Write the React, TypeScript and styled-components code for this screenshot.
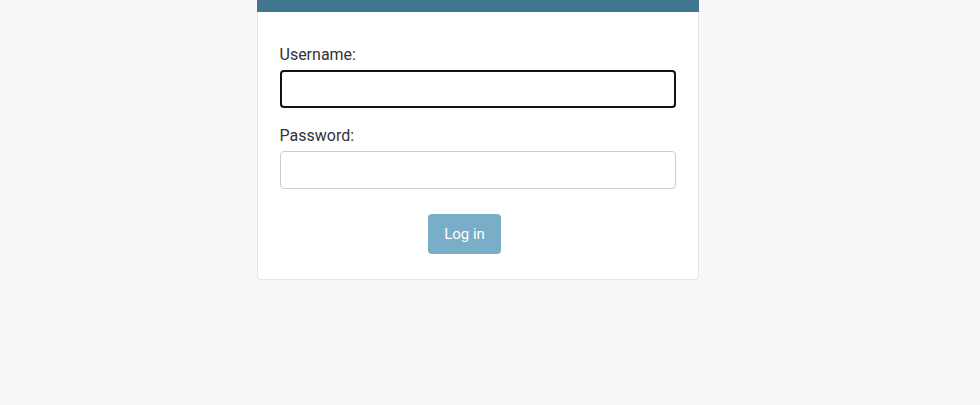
import React from "react";
import styled, { createGlobalStyle } from "styled-components";

const Global = createGlobalStyle`
  html, body { margin: 0; padding: 0; background: #f8f8f8; }
  body { font-family: Roboto, "Liberation Sans", Arial, sans-serif; color: #333; }
  * { box-sizing: border-box; }
`;

const Page = styled.div`
  display: flex;
  justify-content: center;
  padding-right: 25px;
  min-height: 405px;
`;

const Card = styled.div`
  width: 442px;
  height: 280px;
  background: #fff;
  border: 1px solid #e6e6e6;
  border-top: none;
  border-radius: 0 0 4px 4px;
  display: flex;
  flex-direction: column;
`;

const Header = styled.div`
  height: 12px;
  background: #417690;
  margin: 0 -1px;
`;

const Form = styled.form`
  display: flex;
  flex-direction: column;
  padding: 33px 22px 0;
`;

const Row = styled.div`
  display: flex;
  flex-direction: column;
  gap: 5px;
  & + & { margin-top: 18px; }
`;

const Label = styled.label`
  font-size: 16px;
  line-height: 20px;
  color: #333;
`;

const Input = styled.input<{ $focused?: boolean }>`
  height: 38px;
  width: 100%;
  border-radius: 4px;
  background: #fff;
  font-family: inherit;
  font-size: 16px;
  padding: 0 8px;
  outline: none;
  border: ${(p) => (p.$focused ? "2px solid #111" : "1px solid #ccc")};
`;

const Submit = styled.div`
  display: flex;
  justify-content: center;
  margin-top: 25px;
  padding-right: 26px;
`;

const Button = styled.button`
  height: 40px;
  width: 73px;
  padding: 0;
  background: #79aec8;
  color: #fff;
  border: none;
  border-radius: 4px;
  font-family: inherit;
  font-size: 15px;
  cursor: pointer;
`;

export default function App() {
  return (
    <>
      <Global />
      <Page>
        <Card>
          <Header />
          <Form onSubmit={(e) => e.preventDefault()}>
            <Row>
              <Label htmlFor="id_username">Username:</Label>
              <Input id="id_username" type="text" $focused />
            </Row>
            <Row>
              <Label htmlFor="id_password">Password:</Label>
              <Input id="id_password" type="password" />
            </Row>
            <Submit>
              <Button type="submit">Log in</Button>
            </Submit>
          </Form>
        </Card>
      </Page>
    </>
  );
}
